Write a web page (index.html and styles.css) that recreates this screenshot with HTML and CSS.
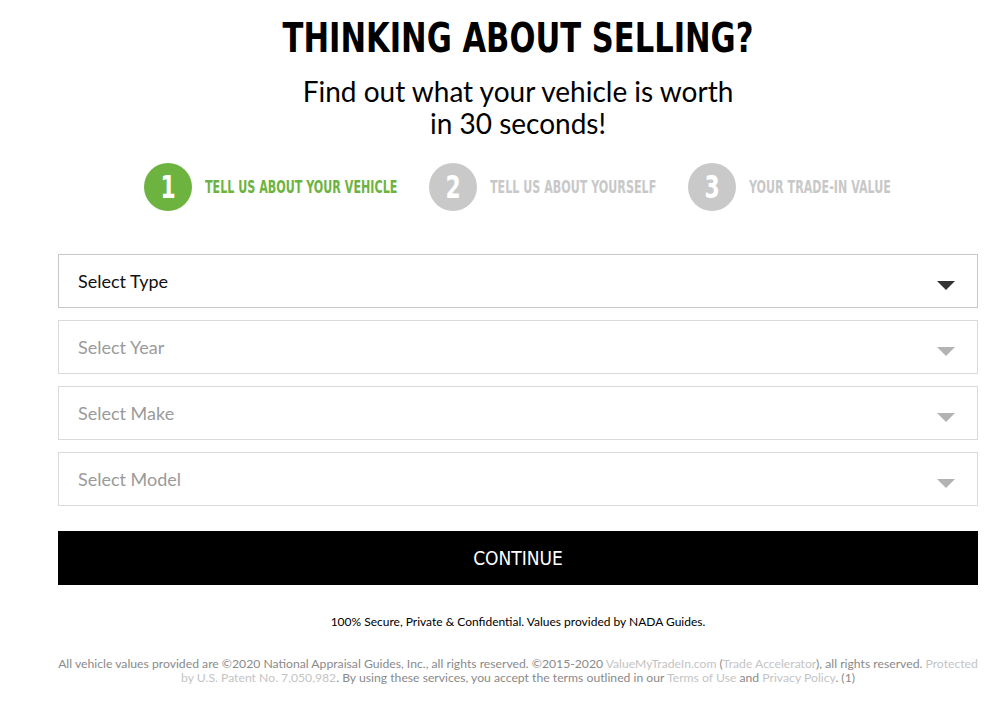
FILE: index.html
```html
<!DOCTYPE html>
<html lang="en">
<head>
<meta charset="utf-8">
<title>Thinking about selling?</title>
<link rel="stylesheet" href="styles.css">
</head>
<body>
<main class="page">
  <h1 class="title">THINKING ABOUT SELLING?</h1>
  <p class="subtitle">Find out what your vehicle is worth<br>in 30 seconds!</p>

  <ol class="steps">
    <li class="step active"><span class="num"><span>1</span></span><span class="label w1"><span>TELL US ABOUT YOUR VEHICLE</span></span></li>
    <li class="step"><span class="num"><span>2</span></span><span class="label w2"><span>TELL US ABOUT YOURSELF</span></span></li>
    <li class="step"><span class="num"><span>3</span></span><span class="label w3"><span>YOUR TRADE-IN VALUE</span></span></li>
  </ol>

  <form class="form">
    <div class="select enabled"><span>Select Type</span><i class="arrow"></i></div>
    <div class="select"><span>Select Year</span><i class="arrow"></i></div>
    <div class="select"><span>Select Make</span><i class="arrow"></i></div>
    <div class="select"><span>Select Model</span><i class="arrow"></i></div>
    <button type="button" class="continue">CONTINUE</button>
  </form>

  <p class="secure">100% Secure, Private &amp; Confidential. Values provided by NADA Guides.</p>

  <p class="legal">All vehicle values provided are ©2020 National Appraisal Guides, Inc., all rights reserved. ©2015-2020 <a>ValueMyTradeIn.com</a> (<a>Trade Accelerator</a>), all rights reserved. <a>Protected</a><br><a>by U.S. Patent No. 7,050,982</a>. By using these services, you accept the terms outlined in our <a>Terms of Use</a> and <a>Privacy Policy</a>. (1)</p>
</main>
</body>
</html>
```
FILE: styles.css
```css
* { box-sizing: border-box; }
html, body { margin: 0; padding: 0; background: #fff; }
body { font-family: Lato, "Liberation Sans", sans-serif; color: #000; }

.page {
  width: 920px;
  margin-left: 58px;
  display: flex;
  flex-direction: column;
  align-items: center;
}

.title {
  margin: 18px 0 0;
  font-family: "DejaVu Sans Condensed", "DejaVu Sans", sans-serif;
  font-stretch: condensed;
  font-size: 40px;
  line-height: 40px;
  font-weight: 700;
  transform: scaleX(0.85);
  white-space: nowrap;
}

.subtitle {
  margin: 17px 0 0;
  font-size: 28px;
  line-height: 32px;
  text-align: center;
}

.steps {
  list-style: none;
  margin: 24px 0 0;
  padding: 0;
  display: flex;
  gap: 32px;
}
.step { display: flex; align-items: center; gap: 13px; color: #c8c8c8; }
.num {
  width: 48px; height: 48px; border-radius: 50%;
  background: #c9c9c9; color: #fff;
  display: flex; align-items: center; justify-content: center;
  font-family: "DejaVu Sans Condensed", "DejaVu Sans", sans-serif;
  font-stretch: condensed;
  font-weight: 700; font-size: 32px;
}
.num span { display: inline-block; transform: scaleX(0.76); }
.label {
  font-family: "DejaVu Sans Condensed", "DejaVu Sans", sans-serif;
  font-stretch: condensed;
  font-weight: 700; font-size: 17.5px;
  white-space: nowrap;
}
.label span { display: inline-block; transform: scaleX(0.707); transform-origin: left center; }
.w1 { width: 192px; }
.w2 { width: 166px; }
.w3 { width: 143px; }
.step.active { color: #6db33f; }
.step.active .num { background: #6db33f; }

.form {
  width: 100%;
  margin-top: 43px;
  display: flex;
  flex-direction: column;
  gap: 12px;
}
.select {
  height: 54px;
  border: 1px solid #dadada;
  padding: 0 22px 0 19px;
  display: flex; align-items: center; justify-content: space-between;
  font-size: 18px; color: #9a9a9a;
}
.select.enabled { border-color: #c8c8c8; color: #111; }
.arrow {
  width: 0; height: 0;
  border-left: 9px solid transparent;
  border-right: 9px solid transparent;
  border-top: 9px solid #b3b3b3;
  margin-top: 8px;
}
.select.enabled .arrow { border-top-color: #333; }

.continue {
  margin-top: 13px;
  height: 54px;
  border: 0;
  background: #000; color: #fff;
  font-family: "DejaVu Sans Condensed", "DejaVu Sans", sans-serif;
  font-stretch: condensed;
  font-size: 19px;
}

.secure { margin: 29px 0 0; font-size: 12px; }

.legal {
  margin: 28px 0 0;
  width: 100%;
  font-size: 12.2px;
  line-height: 14px;
  text-align: center;
  color: #8a8a8a;
  white-space: nowrap;
}
.legal a { color: #c4c4c4; }
```
